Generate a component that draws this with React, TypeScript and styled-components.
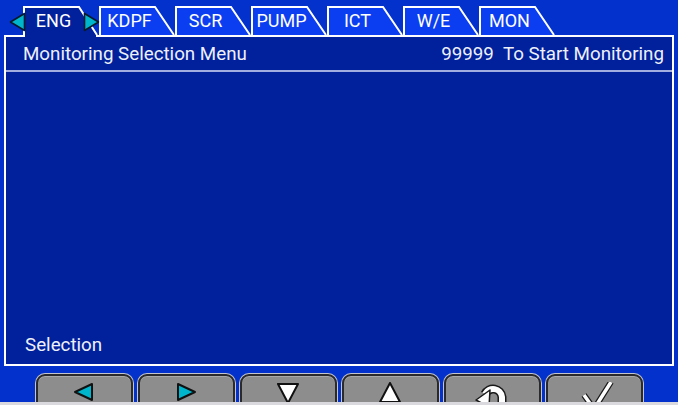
import styled, { createGlobalStyle } from 'styled-components';

const GlobalStyle = createGlobalStyle`
  html, body {
    margin: 0;
    padding: 0;
    background: #0231cc;
    overflow: hidden;
  }
  body {
    font-family: Roboto, 'Liberation Sans', sans-serif;
  }
`;

const Screen = styled.div`
  width: 678px;
  height: 405px;
  display: flex;
  flex-direction: column;
  background: #0231cc;
  color: #eef0fa;
`;

const TabRow = styled.div`
  position: relative;
  z-index: 2;
  height: 35px;
  flex: none;
  display: flex;
  align-items: flex-end;
  padding-left: 23px;
`;

const Tab = styled.div<{ $active?: boolean }>`
  position: relative;
  width: 76px;
  height: ${(p) => (p.$active ? 31 : 29)}px;
  margin-bottom: ${(p) => (p.$active ? -2 : 0)}px;
  padding: 0 15px ${(p) => (p.$active ? 2 : 0)}px 0;
  box-sizing: border-box;
  display: flex;
  align-items: center;
  justify-content: center;
  flex: none;
  font-size: 18px;
  color: #ffffff;
`;

const TabShape = styled.svg`
  position: absolute;
  left: 0;
  top: 0;
  overflow: visible;
`;

const TabLabel = styled.span`
  position: relative;
`;

const ScrollArrow = styled.svg<{ $x: number }>`
  position: absolute;
  left: ${(p) => p.$x}px;
  top: 12px;
  z-index: 3;
`;

const Panel = styled.div`
  margin: 0 4px;
  height: 331px;
  flex: none;
  box-sizing: border-box;
  border: 2px solid #ffffff;
  background: #00209c;
  display: flex;
  flex-direction: column;
`;

const HeaderBar = styled.div`
  height: 35px;
  flex: none;
  box-sizing: border-box;
  border-bottom: 2px solid #a3aee0;
  display: flex;
  align-items: center;
  justify-content: space-between;
  padding: 0 8px 0 17px;
  font-size: 18.75px;
  line-height: 22px;
`;

const HeaderRight = styled.div`
  display: flex;
  gap: 9px;
`;

const Body = styled.div`
  flex: 1;
`;

const FooterLabel = styled.div`
  padding: 0 0 8px 19px;
  font-size: 18.75px;
  line-height: 22px;
`;

const ButtonRow = styled.div`
  margin-top: 7px;
  height: 29px;
  flex: none;
  display: flex;
  justify-content: center;
  gap: 5px;
  overflow: hidden;
  padding-top: 1px;
  box-sizing: border-box;
`;

const SoftKey = styled.div`
  width: 97px;
  height: 44px;
  flex: none;
  box-sizing: border-box;
  border: 2px solid #2a2a2c;
  border-radius: 9px 9px 0 0;
  background: #8d8d8d;
  box-shadow: 0 0 0 1px #c4c4cc, inset 0 1px 0 #a9a9a9;
  display: flex;
  justify-content: center;
  align-items: flex-start;
  padding-top: 6px;
`;

const BottomStrip = styled.div`
  height: 3px;
  flex: none;
  background: #dadade;
`;

const tabs = ['ENG', 'KDPF', 'SCR', 'PUMP', 'ICT', 'W/E', 'MON'];

const InactiveShape = () => (
  <TabShape width={76} height={29} viewBox="0 0 76 29">
    <polygon points="1,29 1,1 56,1 75,29" fill="#0b3ef0" />
    <polyline points="1,29 1,1 56,1 75,29" fill="none" stroke="#ffffff" strokeWidth={2} />
  </TabShape>
);

const ActiveShape = () => (
  <TabShape width={76} height={31} viewBox="0 0 76 31">
    <polygon points="2,31 2,2 55,2 73,29 73,31" fill="#00209c" />
    <polyline points="1,31 1,1 56,1 74,29" fill="none" stroke="#ffffff" strokeWidth={2} />
  </TabShape>
);

const Triangle = ({ dir, fill }: { dir: 'left' | 'right' | 'up' | 'down'; fill: string }) => {
  const pts = {
    left: '3,10 20,2 20,18',
    right: '21,10 4,2 4,18',
    down: '2,2 22,2 12,21',
    up: '12,1 22,20 2,20',
  }[dir];
  return (
    <svg width={24} height={24} viewBox="0 0 24 24">
      <polygon points={pts} fill={fill} stroke="#111111" strokeWidth={2} strokeLinejoin="round" />
    </svg>
  );
};

const ReturnIcon = () => (
  <svg width={40} height={40} viewBox="0 0 40 40">
    <g fill="none" strokeLinejoin="round">
      <path d="M30 40 V15 A9 9 0 0 0 13 12" stroke="#1a1a1a" strokeWidth={9} />
      <path d="M30 40 V15 A9 9 0 0 0 13 12" stroke="#ffffff" strokeWidth={6} />
    </g>
    <polygon points="4,18 18,8 17,25" fill="#ffffff" stroke="#1a1a1a" strokeWidth={1.5} strokeLinejoin="round" />
  </svg>
);

const CheckIcon = () => (
  <svg width={40} height={40} viewBox="0 0 40 40">
    <path d="M10 13 L20 27 L37 0" fill="none" stroke="#1a1a1a" strokeWidth={6} />
    <path d="M10 13 L20 27 L37 0" fill="none" stroke="#ffffff" strokeWidth={3.5} />
  </svg>
);

const Arrow = ({ x, dir }: { x: number; dir: 'left' | 'right' }) => (
  <ScrollArrow $x={x} width={17} height={20} viewBox="0 0 17 20">
    <polygon
      points={dir === 'left' ? '1.5,10 15.5,1.5 15.5,18.5' : '15.5,10 1.5,1.5 1.5,18.5'}
      fill="#00b6cc"
      stroke="#0a1a2a"
      strokeWidth={1.6}
      strokeLinejoin="round"
    />
  </ScrollArrow>
);

export default function App() {
  return (
    <Screen>
      <GlobalStyle />
      <TabRow>
        {tabs.map((t, i) => (
          <Tab key={t} $active={i === 0}>
            {i === 0 ? <ActiveShape /> : <InactiveShape />}
            <TabLabel>{t}</TabLabel>
          </Tab>
        ))}
        <Arrow x={9} dir="left" />
        <Arrow x={83} dir="right" />
      </TabRow>
      <Panel>
        <HeaderBar>
          <span>Monitoring Selection Menu</span>
          <HeaderRight>
            <span>99999</span>
            <span>To Start Monitoring</span>
          </HeaderRight>
        </HeaderBar>
        <Body />
        <FooterLabel>Selection</FooterLabel>
      </Panel>
      <ButtonRow>
        <SoftKey>
          <Triangle dir="left" fill="#00b6cc" />
        </SoftKey>
        <SoftKey>
          <Triangle dir="right" fill="#00b6cc" />
        </SoftKey>
        <SoftKey>
          <Triangle dir="down" fill="#ffffff" />
        </SoftKey>
        <SoftKey>
          <Triangle dir="up" fill="#ffffff" />
        </SoftKey>
        <SoftKey>
          <ReturnIcon />
        </SoftKey>
        <SoftKey>
          <CheckIcon />
        </SoftKey>
      </ButtonRow>
      <BottomStrip />
    </Screen>
  );
}
